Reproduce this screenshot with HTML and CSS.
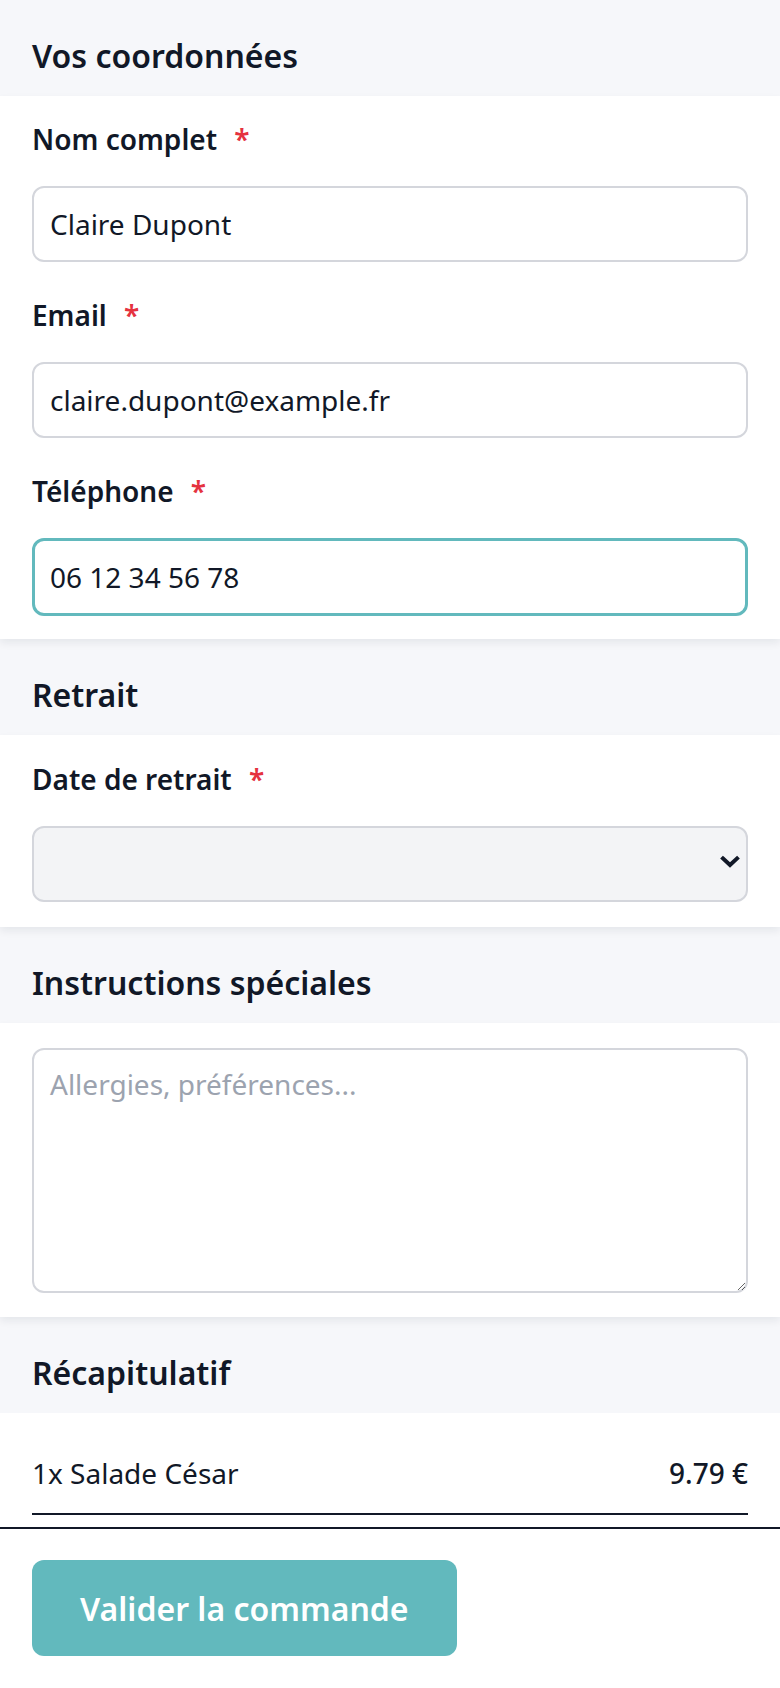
FILE: index.html
```html
<!DOCTYPE html>
<html lang="fr">
<head>
<meta charset="utf-8">
<title>Commande</title>
<link rel="stylesheet" href="styles.css">
</head>
<body>
<main class="page">
  <section class="section">
    <h2 class="section-title">Vos coordonnées</h2>
    <div class="card">
      <div class="field">
        <label class="label" for="name">Nom complet <span class="req">*</span></label>
        <input class="input" id="name" type="text" value="Claire Dupont">
      </div>
      <div class="field">
        <label class="label" for="email">Email <span class="req">*</span></label>
        <input class="input" id="email" type="email" value="claire.dupont@example.fr">
      </div>
      <div class="field">
        <label class="label" for="tel">Téléphone <span class="req">*</span></label>
        <input class="input input-focused" id="tel" type="tel" value="06 12 34 56 78">
      </div>
    </div>
  </section>

  <section class="section">
    <h2 class="section-title">Retrait</h2>
    <div class="card card-select">
      <div class="field">
        <label class="label" for="date">Date de retrait <span class="req">*</span></label>
        <div class="select-wrap">
          <select class="select" id="date"><option></option></select>
          <svg class="chevron" width="20" height="14" viewBox="0 0 20 14" aria-hidden="true"><path d="M3 3.5 L10 10 L17 3.5" fill="none" stroke="#111827" stroke-width="4" stroke-linecap="square" stroke-linejoin="miter"/></svg>
        </div>
      </div>
    </div>
  </section>

  <section class="section">
    <h2 class="section-title">Instructions spéciales</h2>
    <div class="card card-textarea">
      <textarea class="textarea" placeholder="Allergies, préférences..."></textarea>
    </div>
  </section>

  <section class="section">
    <h2 class="section-title">Récapitulatif</h2>
    <div class="card card-summary">
      <div class="line-item">
        <span class="item-name">1x Salade César</span>
        <span class="item-price">9.79 €</span>
      </div>
    </div>
  </section>

  <footer class="footer">
    <button class="submit" type="button">Valider la commande</button>
  </footer>
</main>
</body>
</html>
```

FILE: styles.css
```css
* {
  box-sizing: border-box;
}

html, body {
  margin: 0;
  padding: 0;
}

body {
  background: #f6f7fa;
  font-family: "Noto Sans", "Open Sans", sans-serif;
  color: #111827;
}

.page {
  display: flex;
  flex-direction: column;
  min-height: 1688px;
}

.section {
  display: flex;
  flex-direction: column;
}

.section-title {
  margin: 0;
  padding: 32px 32px 16px;
  font-size: 32px;
  line-height: 48px;
  font-weight: 600;
  color: #111827;
}

.card {
  background: #ffffff;
  padding: 22px 32px 23px;
  display: flex;
  flex-direction: column;
  gap: 32px;
  box-shadow: 0 4px 8px rgba(17, 24, 39, 0.07);
  position: relative;
  z-index: 1;
}

.field {
  display: flex;
  flex-direction: column;
  gap: 26px;
}

.label {
  font-size: 28px;
  line-height: 42px;
  font-weight: 600;
  color: #111827;
}

.req {
  color: #e5323f;
  margin-left: 10px;
}

.input {
  height: 76px;
  width: 100%;
  border: 2px solid #d4d6dc;
  border-radius: 12px;
  padding: 0 16px;
  font-family: "Noto Sans", "Open Sans", sans-serif;
  font-size: 28px;
  color: #111827;
  background: #ffffff;
  outline: none;
}

.input-focused {
  border: 3px solid #62b9bd;
  padding: 0 15px;
  height: 78px;
}

.card-select {
  padding: 23px 32px 25px;
}

.select-wrap {
  position: relative;
}

.select {
  -webkit-appearance: none;
  appearance: none;
  display: block;
  width: 100%;
  height: 76px;
  border: 2px solid #d4d6dc;
  border-radius: 12px;
  background: #f3f4f6;
  font-family: "Noto Sans", "Open Sans", sans-serif;
  font-size: 28px;
  color: #111827;
  padding: 0 16px;
}

.chevron {
  position: absolute;
  right: 8px;
  top: 29px;
  pointer-events: none;
}

.card-textarea {
  padding: 25px 32px 24px;
}

.textarea {
  display: block;
  width: 100%;
  height: 245px;
  border: 2px solid #d4d6dc;
  border-radius: 12px;
  padding: 13px 16px;
  font-family: "Noto Sans", "Open Sans", sans-serif;
  font-size: 28px;
  line-height: 42px;
  color: #111827;
  background: #ffffff;
  resize: vertical;
  outline: none;
}

.textarea::placeholder {
  color: #9ca3af;
}

.card-summary {
  padding: 24px 32px 12px;
  box-shadow: none;
}

.line-item {
  display: flex;
  justify-content: space-between;
  align-items: baseline;
  padding: 15px 0 19px;
  border-bottom: 2px solid #111827;
  font-size: 28px;
  line-height: 42px;
}

.item-name {
  font-weight: 400;
}

.item-price {
  font-weight: 500;
}

.footer {
  background: #ffffff;
  border-top: 2px solid #111827;
  padding: 31px 32px 32px;
  flex: 1;
}

.submit {
  height: 96px;
  padding: 0 48px;
  border: none;
  border-radius: 12px;
  background: #62b9bd;
  color: #ffffff;
  font-family: "Noto Sans", "Open Sans", sans-serif;
  font-size: 32px;
  font-weight: 600;
  cursor: pointer;
}
```
